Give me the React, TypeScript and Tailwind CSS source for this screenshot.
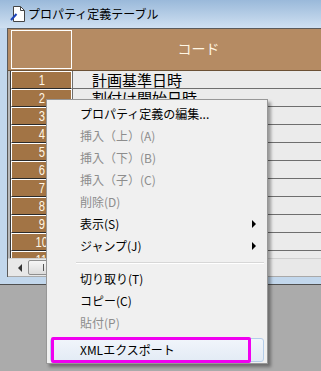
import React from 'react';

const jp = { fontFamily: '"Noto Sans CJK JP", "Noto Sans", sans-serif' };

const rows = ['計画基準日時', '割付け開始日時', '', '', '', '', '', '', '', '', ''];

type ItemProps = { label: string; disabled?: boolean; arrow?: boolean };

const MenuItem = ({ label, disabled, arrow }: ItemProps) => (
  <div className="h-[22px] flex items-center pl-[33px] pr-[11px] text-[12px] leading-none">
    <span className={disabled ? 'text-[#8d8d8d]' : 'text-black'}>{label}</span>
    {arrow && (
      <span className="ml-auto w-0 h-0 border-y-[4px] border-y-transparent border-l-[4px] border-l-black" />
    )}
  </div>
);

const TitleIcon = () => (
  <svg width="16" height="16" viewBox="0 0 16 16">
    <path d="M3.5 0.5 H10.5 L14.5 4.5 V15.5 H3.5 Z" fill="#fff" stroke="#444" />
    <path d="M10.5 0.5 V4.5 H14.5" fill="none" stroke="#444" />
    <path d="M1 14 L6.5 8" stroke="#1d43b8" strokeWidth="2" />
  </svg>
);

export default function App() {
  return (
    <div className="relative w-[321px] h-[371px] overflow-hidden bg-[#ababab]" style={jp}>
      {/* window */}
      <div className="h-[285px] bg-[#c2d7ec] border-b border-[#4f4f4f] flex flex-col">
        <div className="h-[28px] flex items-center pl-[10px] gap-[2px] bg-gradient-to-b from-[#9ab9da] to-[#cfe0f1]">
          <TitleIcon />
          <span className="text-[12px] text-black leading-none">プロパティ定義テーブル</span>
        </div>
        <div className="ml-[7px] h-[249px] border-l border-t border-[#5a5a5a] bg-[#a9a9a9] flex flex-col">
          {/* header */}
          <div className="h-[42px] flex bg-[#b58b63] border-b border-[#6b5135] pl-[3px] py-[1px]">
            <div className="w-[61px] border border-white" />
            <div className="flex-1 flex items-center justify-center text-[14px] text-[#fff6e4] pr-[0px]">
              <span className="ml-[4px] -mt-[2px]">コード</span>
            </div>
          </div>
          {/* rows */}
          <div className="h-[187px] overflow-hidden flex flex-col">
            {rows.map((r, i) => (
              <div key={i} className="h-[18px] shrink-0 flex">
                <div className="w-[3px] bg-[#b9b9b9] border-r border-[#3a3a3a]" />
                <div className="w-[61px] bg-[#a27445] border border-white border-b-[#2a2a2a] flex items-center justify-center text-[14px] text-[#fff6e4] leading-none"
                  style={{ fontFamily: '"Liberation Sans", sans-serif' }}>
                  <span className="scale-x-[0.8]">{i + 1}</span>
                </div>
                <div className="flex-1 bg-[#ebebeb] border-l border-b border-[#6e6e6e] pl-[19px] flex items-center text-[15px] text-black leading-none">
                  {r}
                </div>
              </div>
            ))}
          </div>
          {/* scroll bar */}
          <div className="h-[18px] bg-[#e8e8e8] border-t border-[#d0d0d0] flex items-center pl-[3px]">
            <div className="w-[17px] h-[16px] flex items-center justify-center">
              <span className="w-0 h-0 border-y-[4px] border-y-transparent border-r-[4px] border-r-[#333]" />
            </div>
            <div className="ml-[0px] w-[60px] h-[15px] rounded-[2px] border border-[#8f8f8f] bg-gradient-to-b from-[#f6f6f6] to-[#dcdcdc] flex items-center pl-[14px]">
              <span className="w-[1px] h-[7px] bg-[#555]" />
            </div>
          </div>
        </div>
      </div>

      {/* context menu */}
      <div className="absolute left-[46px] top-[99px] w-[222px] h-[265px] border border-[#979797] bg-[#f0f0f0] shadow-[3px_3px_3px_rgba(0,0,0,0.35)] pt-[3px] flex flex-col">
        <MenuItem label="プロパティ定義の編集..." />
        <MenuItem label="挿入（上）(A)" disabled />
        <MenuItem label="挿入（下）(B)" disabled />
        <MenuItem label="挿入（子）(C)" disabled />
        <MenuItem label="削除(D)" disabled />
        <MenuItem label="表示(S)" arrow />
        <MenuItem label="ジャンプ(J)" arrow />
        <div className="h-[11px] flex items-center pl-[29px] pr-[3px]">
          <div className="w-full border-t border-[#d7d7d7] border-b border-b-white" />
        </div>
        <MenuItem label="切り取り(T)" />
        <MenuItem label="コピー(C)" />
        <MenuItem label="貼付(P)" disabled />
        <div className="h-[4px]" />
        <div className="mx-[3px] h-[24px] rounded-[3px] border border-[#b4cde9] bg-gradient-to-b from-[#f1f5fb] to-[#e3ebf5] flex items-center pl-[29px] text-[12px] leading-none text-black">
          XMLエクスポート
        </div>
      </div>

      {/* annotation */}
      <div className="absolute left-[51px] top-[337px] w-[200px] h-[26px] border-[3px] border-[#f000f0] rounded-[2px]" />
    </div>
  );
}
